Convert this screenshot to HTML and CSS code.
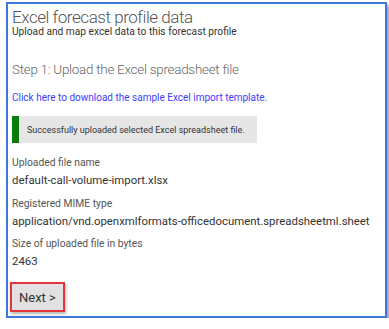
FILE: index.html
```html
<!DOCTYPE html>
<html>
<head>
  <meta charset="UTF-8">
  <title>Excel forecast profile data</title>
  <link rel="stylesheet" href="styles.css">
</head>
<body>
  <div class="panel">
    <h1 class="title">Excel forecast profile data</h1>
    <p class="subtitle">Upload and map excel data to this forecast profile</p>

    <h2 class="step">Step 1: Upload the Excel spreadsheet file</h2>
    <a class="template-link" href="#">Click here to download the sample Excel import template.</a>

    <div class="notice">
      <span class="notice-text">Successfully uploaded selected Excel spreadsheet file.</span>
    </div>

    <div class="field">
      <div class="field-label">Uploaded file name</div>
      <div class="field-value">default-call-volume-import.xlsx</div>
    </div>
    <div class="field">
      <div class="field-label">Registered MIME type</div>
      <div class="field-value">application/vnd.openxmlformats-officedocument.spreadsheetml.sheet</div>
    </div>
    <div class="field">
      <div class="field-label">Size of uploaded file in bytes</div>
      <div class="field-value">2463</div>
    </div>

    <button class="next-button">Next &gt;</button>
  </div>
</body>
</html>
```

FILE: styles.css
```css
body {
  margin: 0;
  background: #fff;
  font-family: Roboto, "Open Sans", sans-serif;
  color: #333;
}
.panel {
  margin: 2px 0 0 6px;
  width: 369px;
  height: 312px;
  border: 2px solid #3f76d9;
  box-shadow: 3px 3px 3px rgba(0,0,0,0.35);
  padding: 0 4px;
  box-sizing: content-box;
  overflow: hidden;
  white-space: nowrap;
}
.title {
  margin: 4px 0 0;
  font-size: 17px;
  font-weight: 300;
  letter-spacing: -0.45px;
  line-height: 18px;
  color: #555;
}
.subtitle {
  margin: 0;
  font-size: 10.2px;
  line-height: 12px;
  color: #333;
}
.step {
  margin: 23px 0 0;
  font-size: 13.4px;
  font-weight: 300;
  letter-spacing: -0.25px;
  line-height: 18px;
  color: #666;
}
.template-link {
  display: block;
  margin-top: 13px;
  font-size: 10px;
  line-height: 12px;
  color: #3d3dff;
  text-decoration: none;
}
.notice {
  margin-top: 12px;
  margin-bottom: 13px;
  width: 238px;
  height: 27px;
  background: #e6e6e6;
  border-left: 7px solid #0a7a0a;
  display: flex;
  align-items: center;
}
.notice-text {
  padding-left: 8px;
  font-size: 9px;
  color: #333;
}
.field {
  margin-top: 6.5px;
}
.field-label {
  font-size: 10.3px;
  line-height: 14px;
  color: #555;
}
.field-value {
  font-size: 11.4px;
  line-height: 20px;
  color: #333;
}
.next-button {
  display: block;
  margin: 11px 0 0 -2px;
  padding: 6px 7px 4px;
  font-family: inherit;
  font-size: 13px;
  line-height: 16px;
  color: #333;
  background: #e1e1e1;
  border: 2px solid #e5343c;
  box-shadow: 1px 2px 3px rgba(0,0,0,0.3);
  border-radius: 0;
}
```
